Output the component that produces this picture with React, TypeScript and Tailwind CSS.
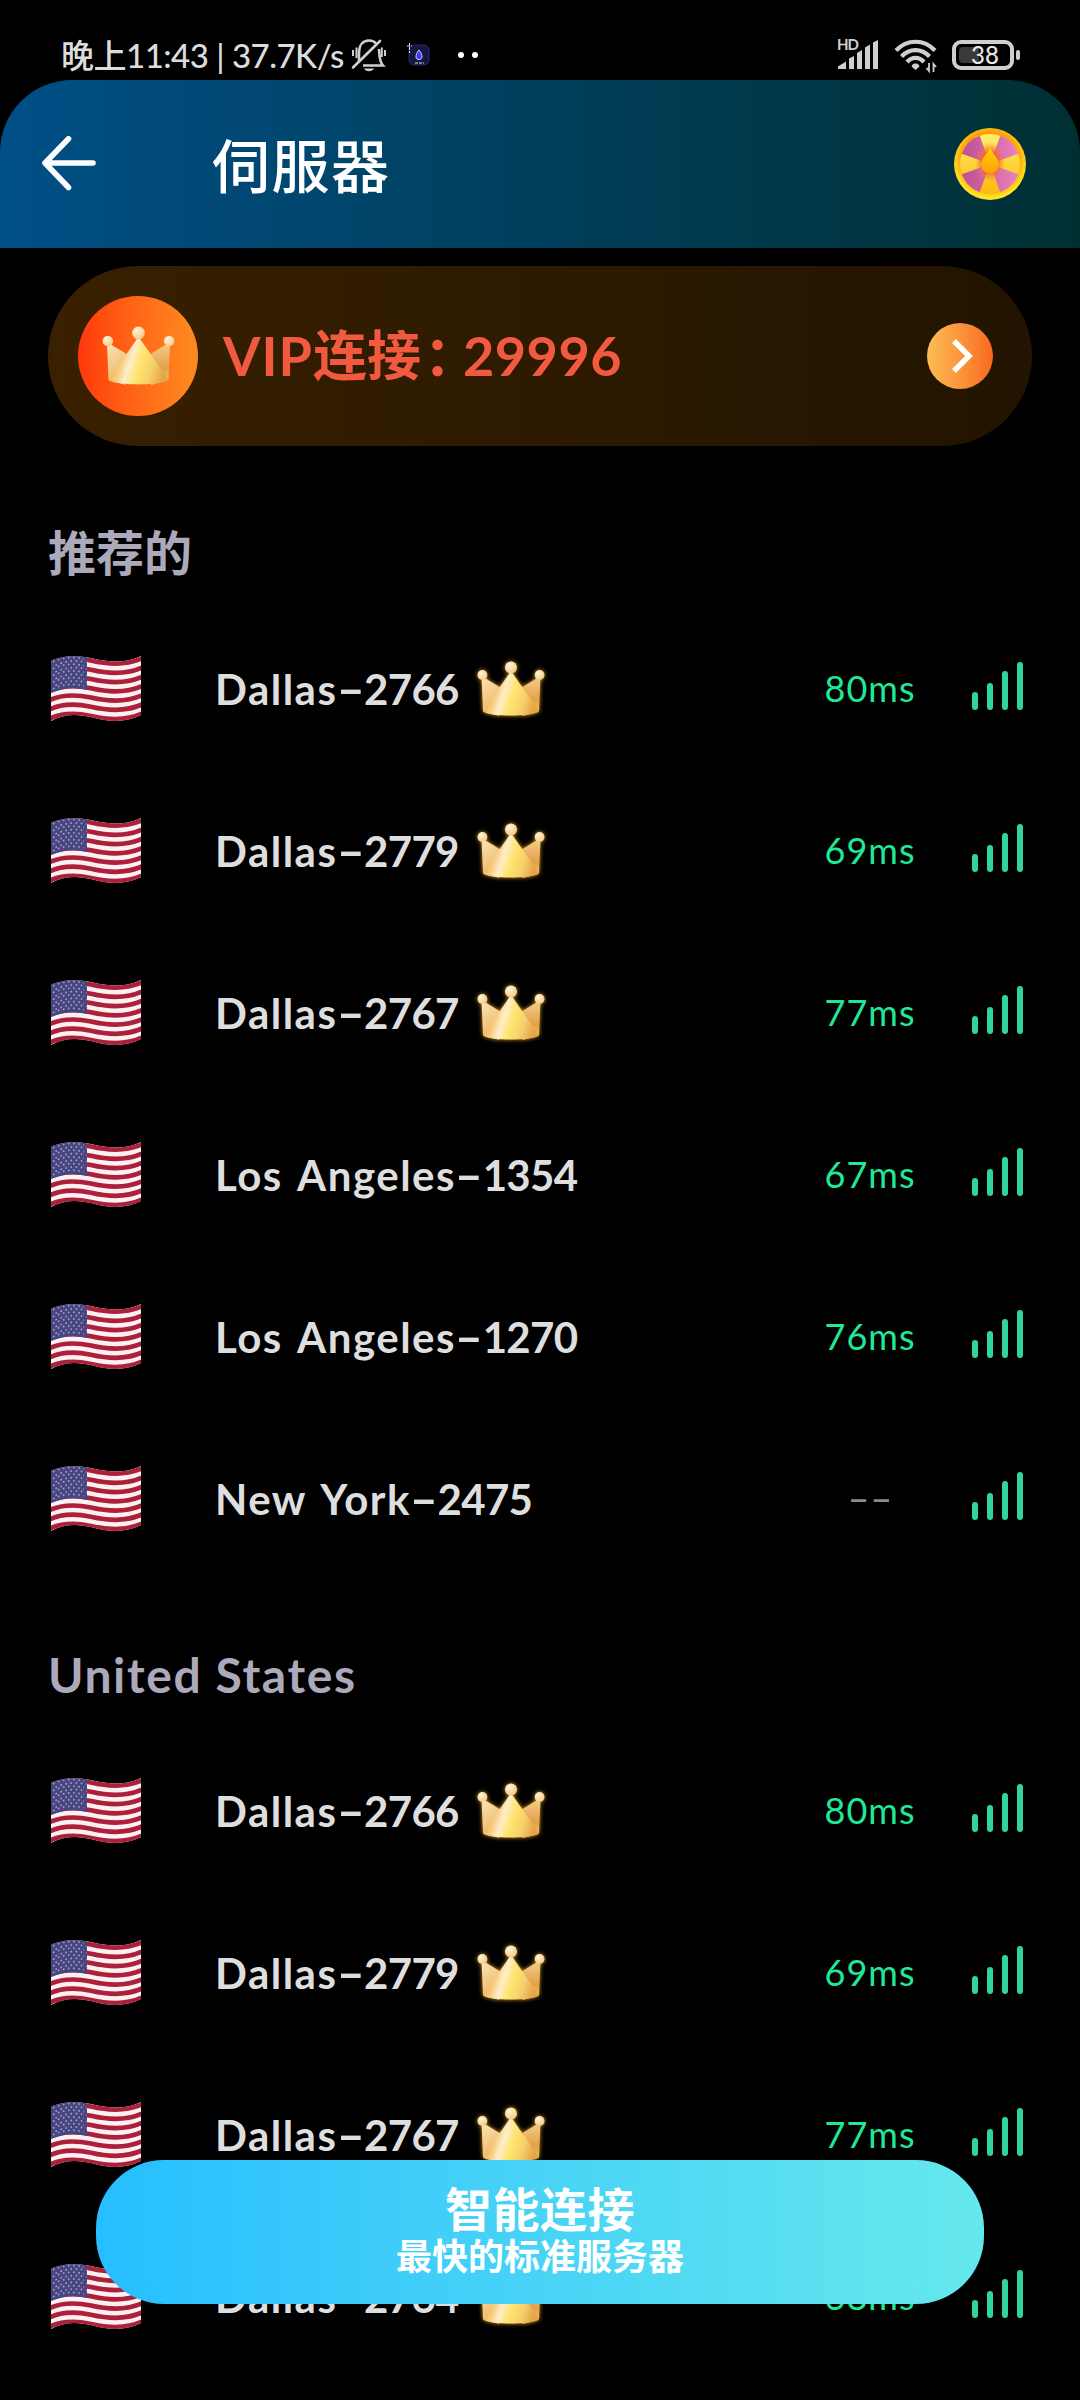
const FONT = "font-['Lato','Noto_Sans_CJK_SC',sans-serif]"

type Server = { name: string; id: string; ping: string; vip?: boolean }

const RECOMMENDED: Server[] = [
    { name: 'Dallas', id: '2766', ping: '80ms', vip: true },
    { name: 'Dallas', id: '2779', ping: '69ms', vip: true },
    { name: 'Dallas', id: '2767', ping: '77ms', vip: true },
    { name: 'Los Angeles', id: '1354', ping: '67ms' },
    { name: 'Los Angeles', id: '1270', ping: '76ms' },
    { name: 'New York', id: '2475', ping: '--' },
]

const UNITED_STATES: Server[] = [
    { name: 'Dallas', id: '2766', ping: '80ms', vip: true },
    { name: 'Dallas', id: '2779', ping: '69ms', vip: true },
    { name: 'Dallas', id: '2767', ping: '77ms', vip: true },
    { name: 'Dallas', id: '2764', ping: '68ms', vip: true },
]

// Gradients and clips shared by every crown and flag on the page
function SharedDefs() {
    return (
        <svg className="absolute size-0" aria-hidden="true">
            <defs>
                <linearGradient id="crown-front" gradientUnits="userSpaceOnUse" x1="28" y1="56" x2="72" y2="70">
                    <stop offset="0" stopColor="#f2bc62" />
                    <stop offset="0.14" stopColor="#f8cf86" />
                    <stop offset="0.28" stopColor="#fdeec9" />
                    <stop offset="0.5" stopColor="#fee46c" />
                    <stop offset="0.75" stopColor="#f6cf6c" />
                    <stop offset="1" stopColor="#e5a548" />
                </linearGradient>
                <linearGradient id="crown-left" x1="0" y1="0" x2="0.6" y2="1">
                    <stop offset="0" stopColor="#fce5bb" />
                    <stop offset="1" stopColor="#e9ac50" />
                </linearGradient>
                <linearGradient id="crown-right" x1="0" y1="0" x2="0" y2="1">
                    <stop offset="0" stopColor="#f5cf8c" />
                    <stop offset="0.6" stopColor="#e3a14c" />
                    <stop offset="1" stopColor="#f3c665" />
                </linearGradient>
                <radialGradient id="crown-ball" cx="0.35" cy="0.3" r="0.8">
                    <stop offset="0" stopColor="#fff3dc" />
                    <stop offset="1" stopColor="#f3c77c" />
                </radialGradient>
                <clipPath id="flag-shape">
                    <path d="M0 4.5C12 -.5 25 -1 40 2C57 6 74 8 90 0V59C74 67 58 66 42 61.5C26 57.5 13 58 0 65Z" />
                </clipPath>
            </defs>
        </svg>
    )
}

function Crown({ className }: { className: string }) {
    return (
        <svg className={className} viewBox="16 21 68 56">
            <path d="M20.5 36L50 54L38 76L22 71Z" fill="url(#crown-left)" />
            <path d="M79.5 36L50 54L62 76L78 71Z" fill="url(#crown-right)" />
            <path d="M50 31L78 71C76 77 24 77 22 71Z" fill="url(#crown-front)" />
            <circle cx="21.4" cy="35" r="4.9" fill="url(#crown-ball)" />
            <circle cx="78.6" cy="35" r="4.9" fill="url(#crown-ball)" />
            <circle cx="50" cy="27.5" r="6" fill="url(#crown-ball)" />
        </svg>
    )
}

function Flag() {
    return (
        <svg className="h-[66px] w-[90px]" viewBox="0 0 90 66">
            <g clipPath="url(#flag-shape)">
                <rect width="90" height="66" fill="#fbf1f3" />
                {[0, 2, 4, 6, 8, 10, 12].map((i) => (
                    <path
                        key={i}
                        d="M-1 7C12 1 25 1.5 40 4.5C57 8.5 74 10 91 2.3"
                        transform={`translate(0 ${i * 4.62})`}
                        fill="none"
                        stroke="#ad2039"
                        strokeWidth="4.7"
                    />
                ))}
                <path d="M0 -1H36V34C24 31 12 32 0 37Z" fill="#474680" />
                {[0, 1, 2, 3, 4, 5, 6, 7, 8].map((row) => (
                    <path
                        key={row}
                        d="M0 6C11 1 20 .5 31 3"
                        transform={`translate(${row % 2 ? 4.5 : 2} ${row * 3.35})`}
                        fill="none"
                        stroke="#a6a4cc"
                        strokeWidth="1.6"
                        strokeDasharray="1.6 3.6"
                    />
                ))}
            </g>
        </svg>
    )
}

function SignalBars() {
    return (
        <div className="mb-1.5 flex h-12 w-[51px] items-end justify-between">
            <div className="h-[18px] w-1.5 rounded-full bg-[#31d3a1]"></div>
            <div className="h-[27px] w-1.5 rounded-full bg-[#31d3a1]"></div>
            <div className="h-[39px] w-1.5 rounded-full bg-[#31d3a1]"></div>
            <div className="h-12 w-1.5 rounded-full bg-[#31d3a1]"></div>
        </div>
    )
}

function StatusBar() {
    return (
        <div className="flex h-20 items-start justify-between pt-[38px] pr-[60px] pl-[61px] text-[#dcdcdc]">
            <div className="flex h-[34px] items-center">
                <span className="w-[290px] text-[33px] leading-none font-medium tracking-[-0.5px] whitespace-nowrap">晚上11:43 | 37.7K/s</span>
                <svg className="h-[34px] w-[36px]" viewBox="0 0 36 34" fill="none" stroke="#cfcfcf" strokeWidth="2.6">
                    <path d="M8 24V15C8 7 12 2.500 18 2.500C21 2.500 23.500 3.500 25 5.500M28 11C28.500 17 28 23 32 27.500H12" />
                    <path d="M2 29.500L29 3" strokeLinecap="round" />
                    <path d="M2 12V18M5.500 9.500V20M34 12V18M30.800 9.500V19" strokeWidth="2" />
                    <path d="M13 30.500H23C21.500 34 14.500 34 13 30.500Z" fill="#cfcfcf" stroke="none" />
                </svg>
                <svg className="ml-[19px] h-[26px] w-[26px]" viewBox="0 0 26 26">
                    <rect x="3" y="3" width="20" height="20" rx="5" fill="#17163f" stroke="#2b2a78" />
                    <path d="M13 8C10.500 11 10 13 10 15C10 18.500 16 18.500 16 15C16 13 15.500 11 13 8Z" fill="#3e3df0" stroke="#c9c8ff" />
                    <path d="M3.500 1V11M1 4H6M9 21H18" stroke="#e6e6ff" strokeDasharray="3 1" />
                </svg>
                <div className="ml-[26px] flex gap-2">
                    <div className="size-1.5 rounded-full bg-white"></div>
                    <div className="size-1.5 rounded-full bg-white"></div>
                </div>
            </div>
            <div className="flex h-[34px] items-center">
                <svg className="h-[34px] w-[43px] overflow-visible" viewBox="0 0 43 34" fill="#cfcfcf">
                    <text x="0" y="12" fontSize="15" fontWeight="700" textLength="22">HD</text>
                    <path d="M1 31V28.500L9 23.500V31ZM12 31V20.500L17 18V31ZM20 31V15L25 12V31ZM28 31V9.500L33 6.500V31ZM36 31V4.500L41 2V31Z" />
                </svg>
                <svg className="ml-[14px] h-[36px] w-[44px]" viewBox="0 0 44 36" fill="none" stroke="#cfcfcf" strokeWidth="4.200">
                    <path d="M2 13.500C13 1.800 30 1.800 41 13.500M7.500 19.500C15.500 11 27.500 11 35.500 19.500M13 25C18 19.500 25 19.500 30 25" />
                    <path d="M21.500 26.500C24 26.500 26 28.500 25 30L21.500 33L18 30C17 28.500 19 26.500 21.500 26.500Z" fill="#cfcfcf" stroke="none" />
                    <path d="M35 26V34L32.500 31M39.500 35V27L42 30" strokeWidth="1.800" />
                </svg>
                <div className="ml-[14px] flex h-[30px] w-[62px] items-center rounded-[9px] border-4 border-[#cfcfcf] pl-[3px]">
                    <div className="h-4 w-5 rounded-l-[4px] bg-[#3a3a3a]"></div>
                    <span className="-ml-2 text-[24px] leading-none font-medium text-[#e6e6e6]">38</span>
                </div>
                <div className="ml-0.5 h-2.5 w-1 rounded-full bg-[#cfcfcf]"></div>
            </div>
        </div>
    )
}

function LuckyWheel() {
    return (
        <svg className="size-[72px]" viewBox="-36 -36 72 72">
            <defs>
                <radialGradient id="wheel-rim" gradientUnits="userSpaceOnUse" cx="0" cy="-4" r="40">
                    <stop offset="0.7" stopColor="#ff9d0a" />
                    <stop offset="0.95" stopColor="#fde725" />
                </radialGradient>
                <linearGradient id="wheel-gold" x1="0" y1="0" x2="0" y2="1">
                    <stop offset="0" stopColor="#fff06a" />
                    <stop offset="1" stopColor="#fbb90c" />
                </linearGradient>
                <linearGradient id="wheel-pink" gradientUnits="userSpaceOnUse" x1="-28" y1="0" x2="28" y2="0">
                    <stop offset="0" stopColor="#bd4f94" />
                    <stop offset="1" stopColor="#e981bd" />
                </linearGradient>
                <radialGradient id="wheel-glow">
                    <stop offset="0.45" stopColor="#f6632e" />
                    <stop offset="1" stopColor="#f6803a" stopOpacity="0" />
                </radialGradient>
                <linearGradient id="wheel-drop" x1="0" y1="0" x2="0" y2="1">
                    <stop offset="0" stopColor="#ffd500" />
                    <stop offset="1" stopColor="#ff9d0b" />
                </linearGradient>
            </defs>
            <circle r="36" fill="url(#wheel-rim)" />
            <circle r="30" fill="url(#wheel-gold)" />
            <path
                d="M0 0L10.300 -28.200A30 30 0 0 1 28.200 -10.300ZM0 0L28.200 10.300A30 30 0 0 1 10.300 28.200ZM0 0L-10.300 28.200A30 30 0 0 1 -28.200 10.300ZM0 0L-28.200 -10.300A30 30 0 0 1 -10.300 -28.200Z"
                fill="url(#wheel-pink)"
            />
            <ellipse cy="-2" rx="15" ry="20" fill="url(#wheel-glow)" />
            <path d="M0 -17C2 -10 9 -6 9 1A9 8.500 0 0 1 -9 1C-9 -6 -2 -10 0 -17Z" fill="url(#wheel-drop)" />
        </svg>
    )
}

function Header() {
    return (
        <header className="flex h-[168px] items-center rounded-t-[72px] bg-linear-to-r from-[#004f87] to-[#002f33] pr-[54px] pl-[41px]">
            <svg className="h-[56px] w-[56px]" viewBox="0 0 56 56" fill="none" stroke="white" strokeWidth="5.600" strokeLinecap="round" strokeLinejoin="round">
                <path d="M52 27H4M27.500 2.800L4 27L27.500 51.500" />
            </svg>
            <h1 className="ml-[115px] flex-1 pt-[3px] text-[58px] leading-none font-medium tracking-[1.5px] text-white">伺服器</h1>
            <LuckyWheel />
        </header>
    )
}

function VipCard() {
    return (
        <div className="mx-12 mt-[18px] mb-3 flex h-[180px] items-center rounded-full bg-linear-to-r from-[#382000] to-[#221400] pr-[39px] pl-[30px]">
            <div className="flex size-[120px] items-center justify-center rounded-full bg-linear-to-r from-[#ff370c] to-[#fd8b20]">
                <Crown className="h-[60px] w-[73px]" />
            </div>
            <span className="ml-[25px] flex-1 text-[54px] leading-none font-bold whitespace-nowrap text-[#f15a3f]">
                <span className="tracking-[1px]">VIP</span>连接
                <span className="mr-[12px] ml-[3px] [font-feature-settings:'halt']">：</span>
                <span className="tracking-[0.5px]">29996</span>
            </span>
            <div className="flex size-[66px] items-center justify-center rounded-full bg-linear-to-r from-[#fbbd54] to-[#f8681e]">
                <svg className="size-[36px]" viewBox="0 0 36 36" fill="none" stroke="white" strokeWidth="5.500">
                    <path d="M12 3L27 18L12 33" />
                </svg>
            </div>
        </div>
    )
}

function SectionTitle({ children }: { children: string }) {
    return (
        <h2 className="flex h-[150px] items-center pt-10 pl-12 text-[48px] leading-none font-bold text-[#acaaba]">
            <span className={/^[A-Z]/.test(children) ? 'tracking-[1.6px]' : ''}>{children}</span>
        </h2>
    )
}

function ServerRow({ server }: { server: Server }) {
    return (
        <div className="flex h-[162px] items-center pr-[57px] pl-[51px]">
            <Flag />
            <div className="ml-[74px] flex flex-1 items-center">
                <span className="text-[42px] leading-none font-bold tracking-[1.5px] whitespace-nowrap text-[#dedede] [word-spacing:4px]">
                    {server.name}
                    <span className="mx-[5.5px] inline-block scale-x-[1.8] tracking-normal">-</span>
                    <span className="tracking-[-0.7px]">{server.id}</span>
                </span>
                {server.vip && (
                    <Crown className="ml-[18px] h-[56px] w-[68px] drop-shadow-[0_0_2px_#d99a1c]" />
                )}
            </div>
            {server.ping === '--' ? (
                <span className="w-[108px] scale-x-[1.7] pb-0.5 text-center text-[36px] leading-none text-[#8a8896]">--</span>
            ) : (
                <span className="w-[108px] pb-0.5 text-center text-[36px] leading-none tracking-[1px] text-[#1fe998]">{server.ping}</span>
            )}
            <div className="ml-12">
                <SignalBars />
            </div>
        </div>
    )
}

export default function App() {
    return (
        <div className={`relative h-[2400px] w-[1080px] overflow-hidden bg-black ${FONT}`}>
            <SharedDefs />
            <StatusBar />
            <Header />
            <VipCard />

            <SectionTitle>推荐的</SectionTitle>
            {RECOMMENDED.map((server) => (
                <ServerRow key={server.id} server={server} />
            ))}

            <SectionTitle>United States</SectionTitle>
            {UNITED_STATES.map((server) => (
                <ServerRow key={server.id} server={server} />
            ))}

            {/* Smart connect button floats over the list */}
            <button className="absolute bottom-24 left-24 flex h-[144px] w-[888px] flex-col items-center justify-center gap-[5px] rounded-[68px] bg-linear-to-r from-[#25beff] to-[#65e8ec] pb-[5px] text-white">
                <span className="text-[47px] leading-none font-bold tracking-[0.5px]">智能连接</span>
                <span className="text-[36px] leading-none font-bold">最快的标准服务器</span>
            </button>
        </div>
    )
}
